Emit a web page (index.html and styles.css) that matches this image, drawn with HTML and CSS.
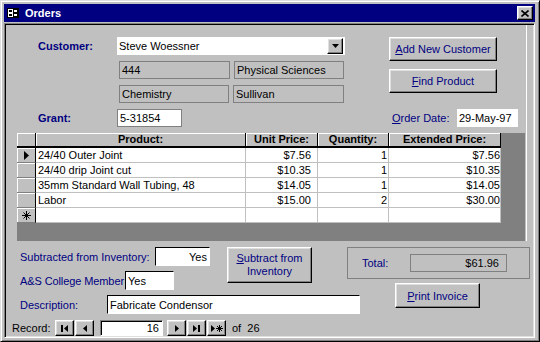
FILE: index.html
```html
<!DOCTYPE html>
<html lang="en">

<head>
    <meta charset="UTF-8">
    <meta name="viewport" content="width=device-width, initial-scale=1.0">
    <title>Orders</title>
    <link rel="stylesheet" href="styles.css">
</head>

<body>
    <div class="window">
        <!-- title bar -->
        <div class="titlebar">
            <svg class="app-icon" width="12" height="10" viewBox="0 0 12 10">
                <rect x="0.5" y="0.5" width="11" height="9" fill="#fff" stroke="#000"/>
                <rect x="2" y="2" width="3" height="2" fill="#000"/>
                <rect x="6.5" y="1.5" width="4" height="3" fill="#fff" stroke="#000"/>
                <rect x="2" y="6" width="3" height="2" fill="#000"/>
                <rect x="6.5" y="5.5" width="4" height="3" fill="#fff" stroke="#000"/>
            </svg>
            <span class="title">Orders</span>
            <span class="close">
                <svg width="8" height="7" viewBox="0 0 8 7">
                    <path d="M0.5 0.5l7 6M7.5 0.5l-7 6" stroke="#000" stroke-width="1.6"/>
                </svg>
            </span>
        </div>

        <div class="client">
            <div class="form">
                <div class="upper">
                    <!-- customer block -->
                    <div class="head">
                        <div class="head-left">
                            <div class="row row-field">
                                <span class="lbl-key">Customer:</span>
                                <div class="combo">
                                    <span class="combo-text">Steve Woessner</span>
                                    <span class="drop">
                                        <svg width="7" height="4" viewBox="0 0 7 4"><path d="M0 0h7L3.5 4z" fill="#000"/></svg>
                                    </span>
                                </div>
                            </div>
                            <div class="pair">
                                <div class="locked w111">444</div>
                                <div class="locked">Physical Sciences</div>
                            </div>
                            <div class="pair">
                                <div class="locked">Chemistry</div>
                                <div class="locked w111">Sullivan</div>
                            </div>
                            <div class="row row-field row-grant">
                                <span class="lbl-key">Grant:</span>
                                <div class="grant">5-31854</div>
                            </div>
                        </div>
                        <div class="head-right">
                            <button class="btn btn-wide"><u>A</u>dd New Customer</button>
                            <button class="btn btn-wide btn-next"><u>F</u>ind Product</button>
                            <div class="row row-field row-date">
                                <span class="lbl lbl-date"><u>O</u>rder Date:</span>
                                <div class="date">29-May-97</div>
                            </div>
                        </div>
                    </div>

                    <!-- order lines -->
                    <div class="sheet">
                        <div class="grid">
                            <div class="hd"></div>
                            <div class="hd">Product:</div>
                            <div class="hd">Unit Price:</div>
                            <div class="hd">Quantity:</div>
                            <div class="hd">Extended Price:</div>

                            <div class="sel">
                                <svg width="5" height="9" viewBox="0 0 5 9"><path d="M0 0l5 4.5L0 9z" fill="#000"/></svg>
                            </div>
                            <div class="cell">24/40 Outer Joint</div>
                            <div class="cell price">$7.56</div>
                            <div class="cell qty">1</div>
                            <div class="cell ext">$7.56</div>

                            <div class="sel"></div>
                            <div class="cell">24/40 drip Joint cut</div>
                            <div class="cell price">$10.35</div>
                            <div class="cell qty">1</div>
                            <div class="cell ext">$10.35</div>

                            <div class="sel"></div>
                            <div class="cell">35mm Standard Wall Tubing, 48</div>
                            <div class="cell price">$14.05</div>
                            <div class="cell qty">1</div>
                            <div class="cell ext">$14.05</div>

                            <div class="sel"></div>
                            <div class="cell">Labor</div>
                            <div class="cell price">$15.00</div>
                            <div class="cell qty">2</div>
                            <div class="cell ext">$30.00</div>

                            <div class="sel">
                                <svg width="9" height="9" viewBox="0 0 9 9">
                                    <path d="M4.5 0v9M0 4.5h9M1.5 1.5l6 6M7.5 1.5l-6 6" stroke="#000" stroke-width="1"/>
                                </svg>
                            </div>
                            <div class="cell"></div>
                            <div class="cell"></div>
                            <div class="cell"></div>
                            <div class="cell"></div>
                        </div>
                    </div>
                </div>

                <!-- footer -->
                <div class="foot">
                    <div class="foot-left">
                        <div class="foot-top">
                            <div class="foot-fields">
                                <div class="frow">
                                    <span class="lbl w-sub">Subtracted from Inventory:</span>
                                    <div class="entry right e-sub">Yes</div>
                                </div>
                                <div class="frow">
                                    <span class="lbl w-mem">A&amp;S College Member</span>
                                    <div class="entry e-mem">Yes</div>
                                </div>
                            </div>
                            <button class="btn btn-sub"><u>S</u>ubtract from<br>Inventory</button>
                        </div>
                        <div class="frow desc-row">
                            <span class="lbl w-desc">Description:</span>
                            <div class="entry e-desc">Fabricate Condensor</div>
                        </div>
                    </div>
                    <div class="foot-right">
                        <div class="total">
                            <span class="lbl lbl-total">Total:</span>
                            <div class="total-box">$61.96</div>
                        </div>
                        <button class="btn btn-print"><u>P</u>rint Invoice</button>
                    </div>
                </div>
            </div>

            <!-- record navigator -->
            <div class="nav">
                <span class="nav-label">Record:</span>
                <span class="nbtn">
                    <svg width="7" height="7" viewBox="0 0 7 7"><path d="M0 0h2v7H0z M7 0v7L3 3.5z" fill="#000"/></svg>
                </span>
                <span class="nbtn">
                    <svg width="4" height="7" viewBox="0 0 4 7"><path d="M4 0v7L0 3.5z" fill="#000"/></svg>
                </span>
                <span class="recno">16</span>
                <span class="nbtn">
                    <svg width="4" height="7" viewBox="0 0 4 7"><path d="M0 0v7l4-3.5z" fill="#000"/></svg>
                </span>
                <span class="nbtn">
                    <svg width="7" height="7" viewBox="0 0 7 7"><path d="M0 0v7l4-3.5z M5 0h2v7H5z" fill="#000"/></svg>
                </span>
                <span class="nbtn">
                    <svg width="12" height="7" viewBox="0 0 12 7">
                        <path d="M0 0v7l4-3.5z" fill="#000"/>
                        <path d="M8.5 0v7M5 3.5h7M6 1l5 5M11 1l-5 5" stroke="#000" stroke-width="1"/>
                    </svg>
                </span>
                <span class="nav-of">of&nbsp; 26</span>
            </div>
        </div>
    </div>
</body>

</html>
```

FILE: styles.css
```css
* {
    box-sizing: border-box;
}

body {
    margin: 0;
    background: #c0c0c0;
    font-family: "Liberation Sans", Arial, sans-serif;
    font-size: 11px;
    color: #000;
}

/* window frame */
.window {
    width: 540px;
    height: 342px;
    display: flex;
    flex-direction: column;
    padding: 3px 4px 3px 3px;
    background: #c0c0c0;
    border: 1px solid;
    border-color: #dfdfdf #000 #000 #dfdfdf;
    box-shadow: inset 1px 1px #fff, inset -1px -1px #808080;
}

.titlebar {
    height: 18px;
    display: flex;
    align-items: center;
    padding: 0 2px 0 3px;
    background: #000080;
    color: #fff;
}

.app-icon {
    margin-right: 6px;
}

.title {
    flex: 1;
    font-weight: bold;
}

.close,
.drop,
.nbtn,
.btn {
    background: #c0c0c0;
    border: 1px solid;
    border-color: #fff #000 #000 #fff;
    box-shadow: inset -1px -1px #808080, inset 1px 1px #dfdfdf;
}

.close {
    width: 16px;
    height: 14px;
    display: flex;
    align-items: center;
    justify-content: center;
}

.client {
    flex: 1;
    margin-top: 1px;
    padding: 1px;
    display: flex;
    flex-direction: column;
    border: 1px solid;
    border-color: #808080 #fff #fff #808080;
    box-shadow: inset 1px 1px #000, inset -1px -1px #dfdfdf;
}

.form {
    height: 294px;
}

/* form width edge, ends under the datasheet */
.upper {
    width: 521px;
    border-right: 1px solid #fff;
}

/* shared bits */
.row {
    display: flex;
    align-items: center;
}

.row-field {
    height: 18px;
}

.lbl {
    flex-shrink: 0;
    white-space: nowrap;
    color: #000080;
}

.lbl-key {
    width: 79px;
    flex-shrink: 0;
    font-weight: bold;
    color: #000080;
}

.btn {
    padding: 0;
    font: inherit;
    color: #000080;
    text-align: center;
}

/* customer block */
.head {
    display: flex;
    padding: 12px 0 0 32px;
}

.head-left {
    width: 307px;
}

.combo {
    width: 228px;
    height: 18px;
    display: flex;
    align-items: center;
    padding-left: 2px;
    background: #fff;
}

.combo-text {
    flex: 1;
}

.drop {
    width: 16px;
    height: 16px;
    margin-right: 2px;
    display: flex;
    align-items: center;
    justify-content: center;
}

.pair {
    display: flex;
    gap: 4px;
    margin: 6px 0 0 81px;
}

.locked {
    width: 110px;
    height: 18px;
    display: flex;
    align-items: center;
    padding-left: 2px;
    border: 1px solid #808080;
}

.locked.w111 {
    width: 111px;
}

.row-grant {
    margin-top: 6px;
}

.grant {
    width: 65px;
    height: 18px;
    padding-left: 2px;
    line-height: 16px;
    background: #fff;
    border: 1px solid #808080;
}

.head-right {
    margin-left: 44px;
    display: flex;
    flex-direction: column;
    align-items: flex-start;
}

.btn-wide {
    width: 108px;
    height: 24px;
}

.btn-next {
    margin-top: 8px;
}

.row-date {
    margin-top: 16px;
}

.lbl-date {
    width: 68px;
    padding-left: 3px;
}

.date {
    width: 61px;
    height: 18px;
    padding-left: 2px;
    line-height: 18px;
    background: #fff;
}

/* datasheet */
.sheet {
    width: 508px;
    height: 108px;
    margin: 6px 0 0 11px;
    background: #808080;
}

.grid {
    display: grid;
    grid-template-columns: 19px 210px 72px 71px 112px;
    grid-auto-rows: 15px;
    width: 484px;
}

.hd {
    background: #c0c0c0;
    font-weight: bold;
    text-align: center;
    line-height: 13px;
    border-right: 1px solid #000;
    border-bottom: 2px solid #000;
    box-shadow: inset 1px 1px #fff;
}

.sel {
    display: flex;
    align-items: center;
    justify-content: center;
    background: #c0c0c0;
    border-right: 1px solid #000;
    border-bottom: 1px solid #808080;
    box-shadow: inset 1px 1px #fff;
}

.cell {
    padding: 0 2px;
    line-height: 14px;
    white-space: nowrap;
    overflow: hidden;
    background: #fff;
    border-right: 1px solid #c0c0c0;
    border-bottom: 1px solid #c0c0c0;
}

.price,
.qty,
.ext {
    text-align: right;
}

.price {
    padding-right: 6px;
}

.qty {
    padding-right: 1px;
}

.ext {
    padding-right: 0;
}

/* footer */
.foot {
    display: flex;
    margin-top: 6px;
    padding-left: 14px;
}

.foot-left {
    width: 327px;
    flex-shrink: 0;
}

.foot-top {
    display: flex;
}

.foot-fields {
    width: 207px;
    flex-shrink: 0;
}

.frow {
    display: flex;
    align-items: center;
    height: 19px;
}

.frow + .frow,
.desc-row {
    margin-top: 5px;
}

.w-sub {
    width: 135px;
}

.w-mem {
    width: 105px;
    letter-spacing: -0.1px;
}

.w-desc {
    width: 87px;
}

.entry {
    height: 19px;
    flex-shrink: 0;
    display: flex;
    align-items: center;
    padding: 0 2px;
    background: #fff;
    border: 1px solid;
    border-color: #000 #fff #fff #000;
}

.entry.right {
    justify-content: flex-end;
}

.e-sub {
    width: 55px;
}

.e-mem {
    width: 49px;
}

.e-desc {
    width: 253px;
}

.btn-sub {
    width: 85px;
    height: 36px;
    flex-shrink: 0;
    line-height: 13px;
}

.foot-right {
    display: flex;
    flex-direction: column;
}

.total {
    width: 183px;
    height: 32px;
    display: flex;
    align-items: center;
    padding-left: 14px;
    border: 1px solid #808080;
}

.lbl-total {
    width: 48px;
}

.total-box {
    width: 97px;
    height: 18px;
    padding-right: 7px;
    line-height: 16px;
    text-align: right;
    border: 1px solid #808080;
}

.btn-print {
    width: 85px;
    height: 25px;
    margin: 4px 0 0 48px;
}

/* record navigator */
.nav {
    height: 17px;
    display: flex;
    align-items: flex-end;
    padding-left: 6px;
}

.nav-label {
    width: 43px;
    line-height: 16px;
}

.nbtn {
    width: 19px;
    height: 16px;
    margin-right: 1px;
    display: flex;
    align-items: center;
    justify-content: center;
}

.recno {
    width: 63px;
    height: 16px;
    margin: 0 4px 0 5px;
    padding-right: 3px;
    line-height: 14px;
    text-align: right;
    background: #fff;
    border: 1px solid;
    border-color: #808080 #fff #fff #808080;
    box-shadow: inset 1px 1px #000;
}

.nav-of {
    margin-left: 5px;
    line-height: 16px;
}
```
